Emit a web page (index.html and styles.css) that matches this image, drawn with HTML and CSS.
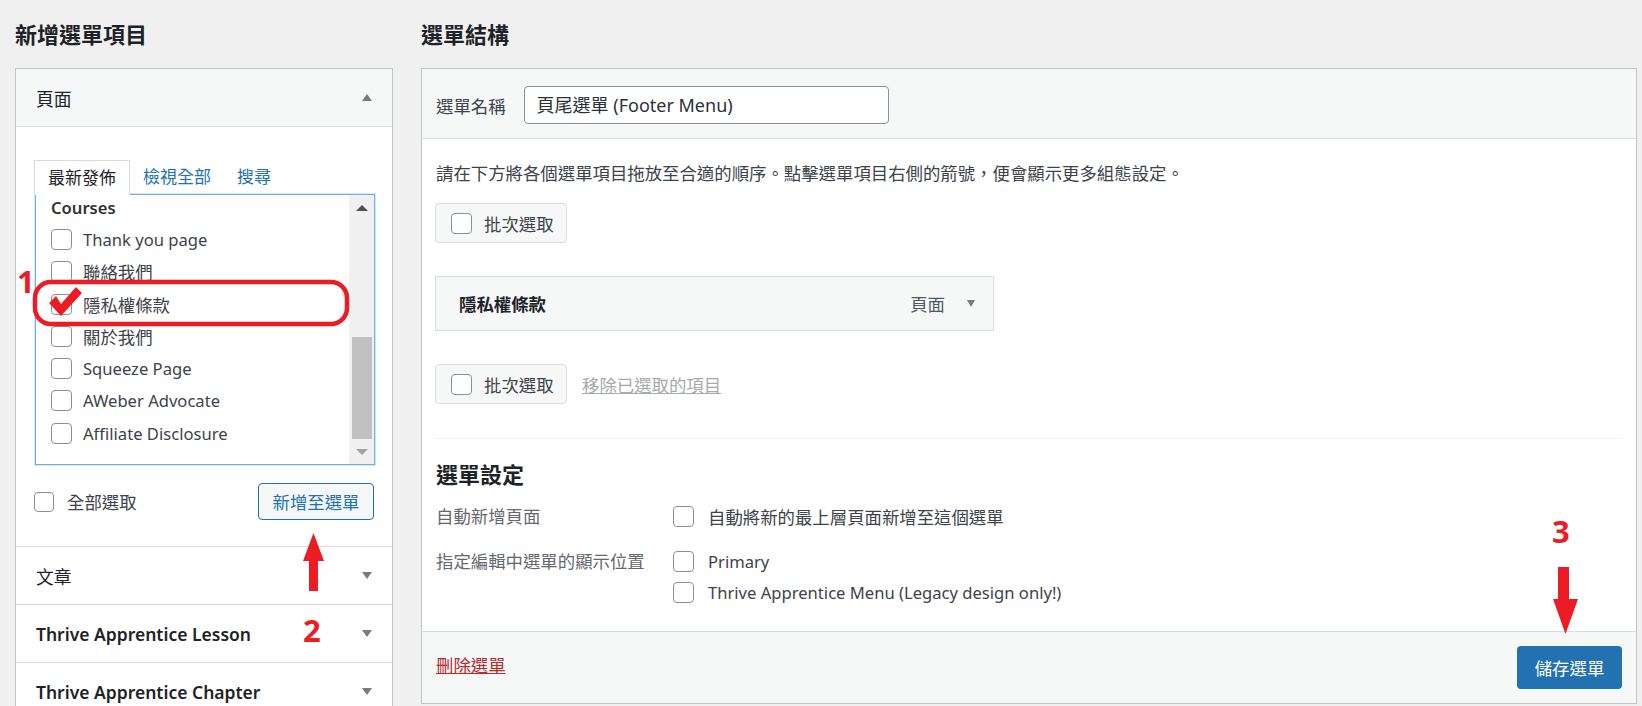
FILE: index.html
```html
<!DOCTYPE html>
<html lang="zh-Hant">
<head>
<meta charset="utf-8">
<title>選單</title>
<link rel="stylesheet" href="styles.css">
</head>
<body>
<div class="page">
  <div class="col-left">
    <h2 class="col-title">新增選單項目</h2>
    <div class="accordion">
      <div class="acc-section open">
        <div class="acc-head"><span class="cjk">頁面</span><span class="tri tri-up"></span></div>
        <div class="acc-body">
          <div class="tabs">
            <span class="tab active">最新發佈</span>
            <a class="tab">檢視全部</a>
            <a class="tab">搜尋</a>
          </div>
          <div class="listbox">
            <ul class="items">
              <li class="group lat">Courses</li>
              <li class="lat"><span class="cb"></span>Thank you page</li>
              <li><span class="cb"></span>聯絡我們</li>
              <li><span class="cb"></span>隱私權條款</li>
              <li><span class="cb"></span>關於我們</li>
              <li class="lat"><span class="cb"></span>Squeeze Page</li>
              <li class="lat"><span class="cb"></span>AWeber Advocate</li>
              <li class="lat"><span class="cb"></span>Affiliate Disclosure</li>
            </ul>
            <div class="scrollbar">
              <span class="sb-btn"><span class="sb-arrow up"></span></span>
              <span class="sb-track"></span>
              <span class="sb-thumb"></span>
              <span class="sb-btn"><span class="sb-arrow down"></span></span>
            </div>
          </div>
          <div class="list-actions">
            <label class="select-all"><span class="cb"></span>全部選取</label>
            <button class="btn-secondary">新增至選單</button>
          </div>
        </div>
      </div>
      <div class="acc-section"><div class="acc-head"><span class="cjk">文章</span><span class="tri tri-down"></span></div></div>
      <div class="acc-section"><div class="acc-head"><span>Thrive Apprentice Lesson</span><span class="tri tri-down"></span></div></div>
      <div class="acc-section"><div class="acc-head"><span>Thrive Apprentice Chapter</span><span class="tri tri-down"></span></div></div>
    </div>
  </div>

  <div class="col-right">
    <h2 class="col-title">選單結構</h2>
    <div class="menu-panel">
      <div class="menu-header">
        <label class="name-label">選單名稱</label>
        <div class="name-input">頁尾選單 (Footer Menu)</div>
      </div>
      <div class="menu-body">
        <p class="instructions">請在下方將各個選單項目拖放至合適的順序。點擊選單項目右側的箭號，便會顯示更多組態設定。</p>
        <div class="bulk-row">
          <span class="bulk-btn"><span class="cb"></span>批次選取</span>
        </div>
        <div class="menu-item">
          <span class="item-title">隱私權條款</span>
          <span class="item-controls"><span class="item-type">頁面</span><span class="tri tri-down small"></span></span>
        </div>
        <div class="bulk-row second">
          <span class="bulk-btn"><span class="cb"></span>批次選取</span>
          <a class="remove-link">移除已選取的項目</a>
        </div>
        <div class="settings">
          <h3 class="settings-title">選單設定</h3>
          <div class="set-row">
            <div class="set-label">自動新增頁面</div>
            <div class="set-options">
              <div class="opt"><span class="cb"></span>自動將新的最上層頁面新增至這個選單</div>
            </div>
          </div>
          <div class="set-row">
            <div class="set-label">指定編輯中選單的顯示位置</div>
            <div class="set-options">
              <div class="opt lat"><span class="cb"></span>Primary</div>
              <div class="opt lat"><span class="cb"></span>Thrive Apprentice Menu (Legacy design only!)</div>
            </div>
          </div>
        </div>
      </div>
      <div class="menu-footer">
        <a class="delete-link">刪除選單</a>
        <button class="btn-primary">儲存選單</button>
      </div>
    </div>
  </div>

  <span class="note note-1">1</span>
  <span class="note note-2">2</span>
  <span class="note note-3">3</span>
  <svg class="marks" width="1642" height="706" viewBox="0 0 1642 706" aria-hidden="true">
    <rect x="35" y="282" width="312" height="42" rx="16" ry="16" fill="none" stroke="#ed1c24" stroke-width="4.5"/>
    <path d="M49 303 L56 296 L61 304 L76 287 L82 293 L61 316 Z" fill="#ed1c24"/>
    <path d="M303 561 L313.5 533 L324 561 L318 561 L318 591 L309 591 L309 561 Z" fill="#ed1c24"/>
    <path d="M1558 567 L1569 567 L1569 599 L1578 599 L1565.5 634 L1553 599 L1558 599 Z" fill="#ed1c24"/>
  </svg>
</div>
</body>
</html>
```

FILE: styles.css
```css
* { box-sizing: border-box; }
html, body { margin: 0; padding: 0; }
body {
  background: #f0f0f1;
  font-family: "Noto Sans", "Noto Sans CJK TC", sans-serif;
  font-size: 17.4px;
  color: #3c434a;
}
.page {
  position: relative;
  display: flex;
  align-items: flex-start;
  width: 1642px;
  height: 706px;
  overflow: hidden;
  padding-left: 15px;
}
.col-left { width: 378px; flex: none; }
.col-right { width: 1216px; flex: none; margin-left: 28px; }
.col-title {
  margin: 0;
  height: 68px;
  line-height: 68px;
  font-size: 22px;
  font-weight: 600;
  color: #1d2327;
}
.lat { font-size: 16.6px; }

/* checkbox */
.cb {
  display: inline-block;
  flex: none;
  width: 21px;
  height: 21px;
  border: 1px solid #8c8f94;
  border-radius: 4px;
  background: #fff;
}

/* accordion */
.accordion {
  border: 1px solid #c3c4c7;
  background: #fff;
  height: 700px;
}
.acc-head {
  height: 58px;
  display: flex;
  align-items: center;
  justify-content: space-between;
  padding: 0 20px;
  font-size: 17.5px;
  font-weight: 600;
  color: #1d2327;
  border-bottom: 1px solid #dcdcde;
}
.acc-head .cjk { font-weight: 400; font-size: 17.8px; }
.open .acc-head { background: #f6f7f7; }
.tri { display: inline-block; width: 0; height: 0; border-left: 5px solid transparent; border-right: 5px solid transparent; }
.tri-up { border-bottom: 7px solid #787c82; }
.tri-down { border-top: 7px solid #787c82; }
.tri.small { border-left-width: 4.5px; border-right-width: 4.5px; border-top-width: 7px; }

.acc-body {
  height: 420px;
  padding: 33px 17px 0 18px;
  border-bottom: 1px solid #dcdcde;
}
.tabs { display: flex; height: 34px; position: relative; z-index: 1; }
.tab {
  padding: 0 13px;
  line-height: 33px;
  font-size: 17px;
  color: #2271b1;
}
.tab.active {
  color: #1d2327;
  background: #fff;
  border: 1px solid #dcdcde;
  border-bottom: none;
  height: 35px;
}
.listbox {
  margin-left: 1px;
  height: 271px;
  display: flex;
  border: 1px solid #72aee6;
  box-shadow: 0 0 0 1px rgba(114, 174, 230, 0.3);
  background: #fff;
  overflow: hidden;
}
.items {
  flex: 1;
  list-style: none;
  margin: -4px 0 0;
  padding: 0 0 0 15px;
}
.items li {
  height: 32.3px;
  display: flex;
  align-items: center;
  gap: 11px;
  color: #3c434a;
}
.items li.group { font-weight: 600; color: #2c3338; }
.scrollbar {
  width: 25px;
  flex: none;
  display: flex;
  flex-direction: column;
  align-items: center;
  background: #f0f0f0;
}
.sb-btn { height: 25px; width: 25px; display: flex; align-items: center; justify-content: center; flex: none; }
.sb-track { flex: 1; }
.sb-thumb { height: 102px; width: 20px; background: #c1c1c1; flex: none; }
.sb-arrow { width: 0; height: 0; border-left: 6px solid transparent; border-right: 6px solid transparent; }
.sb-arrow.up { border-bottom: 6px solid #505050; }
.sb-arrow.down { border-top: 6px solid #a3a3a3; }

.list-actions {
  display: flex;
  align-items: center;
  justify-content: space-between;
  margin-top: 18px;
}
.select-all { display: flex; align-items: center; gap: 13px; color: #3c434a; }
.select-all .cb { width: 20px; height: 20px; }
.btn-secondary {
  height: 37px;
  width: 116px;
  margin-right: 1px;
  border: 1px solid #2271b1;
  border-radius: 4px;
  background: #f6f7f7;
  color: #2271b1;
  font-family: inherit;
  font-size: 17.4px;
  padding: 0;
}

/* right panel */
.menu-panel {
  height: 636px;
  border: 1px solid #c3c4c7;
  background: #fff;
  display: flex;
  flex-direction: column;
}
.menu-header {
  background: #f6f7f7;
  border-bottom: 1px solid #dcdcde;
  display: flex;
  align-items: center;
  gap: 18px;
  padding: 17px 14px 14px;
}
.name-label { color: #3c434a; }
.name-input {
  width: 365px;
  height: 38px;
  border: 1px solid #8c8f94;
  border-radius: 4px;
  background: #fff;
  padding: 0 12px;
  line-height: 36px;
  font-size: 18px;
  color: #2c3338;
}
.menu-body { flex: 1; padding: 0 14px 0 13px; }
.instructions { margin: 22px 0 0 1px; line-height: 24px; color: #3c434a; }
.bulk-row { display: flex; align-items: center; gap: 15px; margin-top: 18px; }
.bulk-row.second { margin-top: 33px; }
.bulk-btn {
  display: flex;
  align-items: center;
  gap: 12px;
  height: 40px;
  width: 132px;
  padding-left: 15px;
  background: #f6f7f7;
  border: 1px solid #dcdcde;
  border-radius: 4px;
  color: #3c434a;
}
.remove-link { color: #a7aaad; text-decoration: underline; }
.menu-item {
  margin-top: 33px;
  width: 559px;
  height: 55px;
  display: flex;
  align-items: center;
  justify-content: space-between;
  padding: 0 18px 0 23px;
  background: #f6f7f7;
  border: 1px solid #dcdcde;
}
.item-title { font-weight: 600; color: #1d2327; }
.item-controls { display: flex; align-items: center; gap: 22px; }
.item-type { color: #50575e; }

.settings { margin-top: 34px; border-top: 1px solid #f0f0f1; }
.settings-title { margin: 20px 0 0 1px; line-height: 30px; font-size: 22px; font-weight: 600; color: #1d2327; }
.set-row { display: flex; margin-top: 12px; }
.set-row + .set-row { margin-top: 14px; }
.set-label { width: 238px; padding-left: 1px; line-height: 31px; color: #646970; flex: none; }
.opt { display: flex; align-items: center; gap: 14px; height: 31px; color: #3c434a; }

.menu-footer {
  flex: none;
  height: 72px;
  border-top: 1px solid #dcdcde;
  background: #f6f7f7;
  display: flex;
  align-items: center;
  justify-content: space-between;
  padding: 0 14px;
}
.delete-link { color: #b32d2e; text-decoration: underline; margin-top: -7px; }
.btn-primary {
  width: 105px;
  height: 43px;
  border: none;
  border-radius: 4px;
  background: #2271b1;
  color: #fff;
  font-family: inherit;
  font-size: 17.4px;
  padding: 0;
}

/* annotations */
.note {
  position: absolute;
  font-family: "Noto Sans", sans-serif;
  font-weight: 700;
  font-size: 31px;
  line-height: 1;
  color: #ed1c24;
}
.note-1 { left: 17px; top: 266px; }
.note-2 { left: 303px; top: 615px; }
.note-3 { left: 1552px; top: 516px; }
.marks { position: absolute; left: 0; top: 0; pointer-events: none; }
```
